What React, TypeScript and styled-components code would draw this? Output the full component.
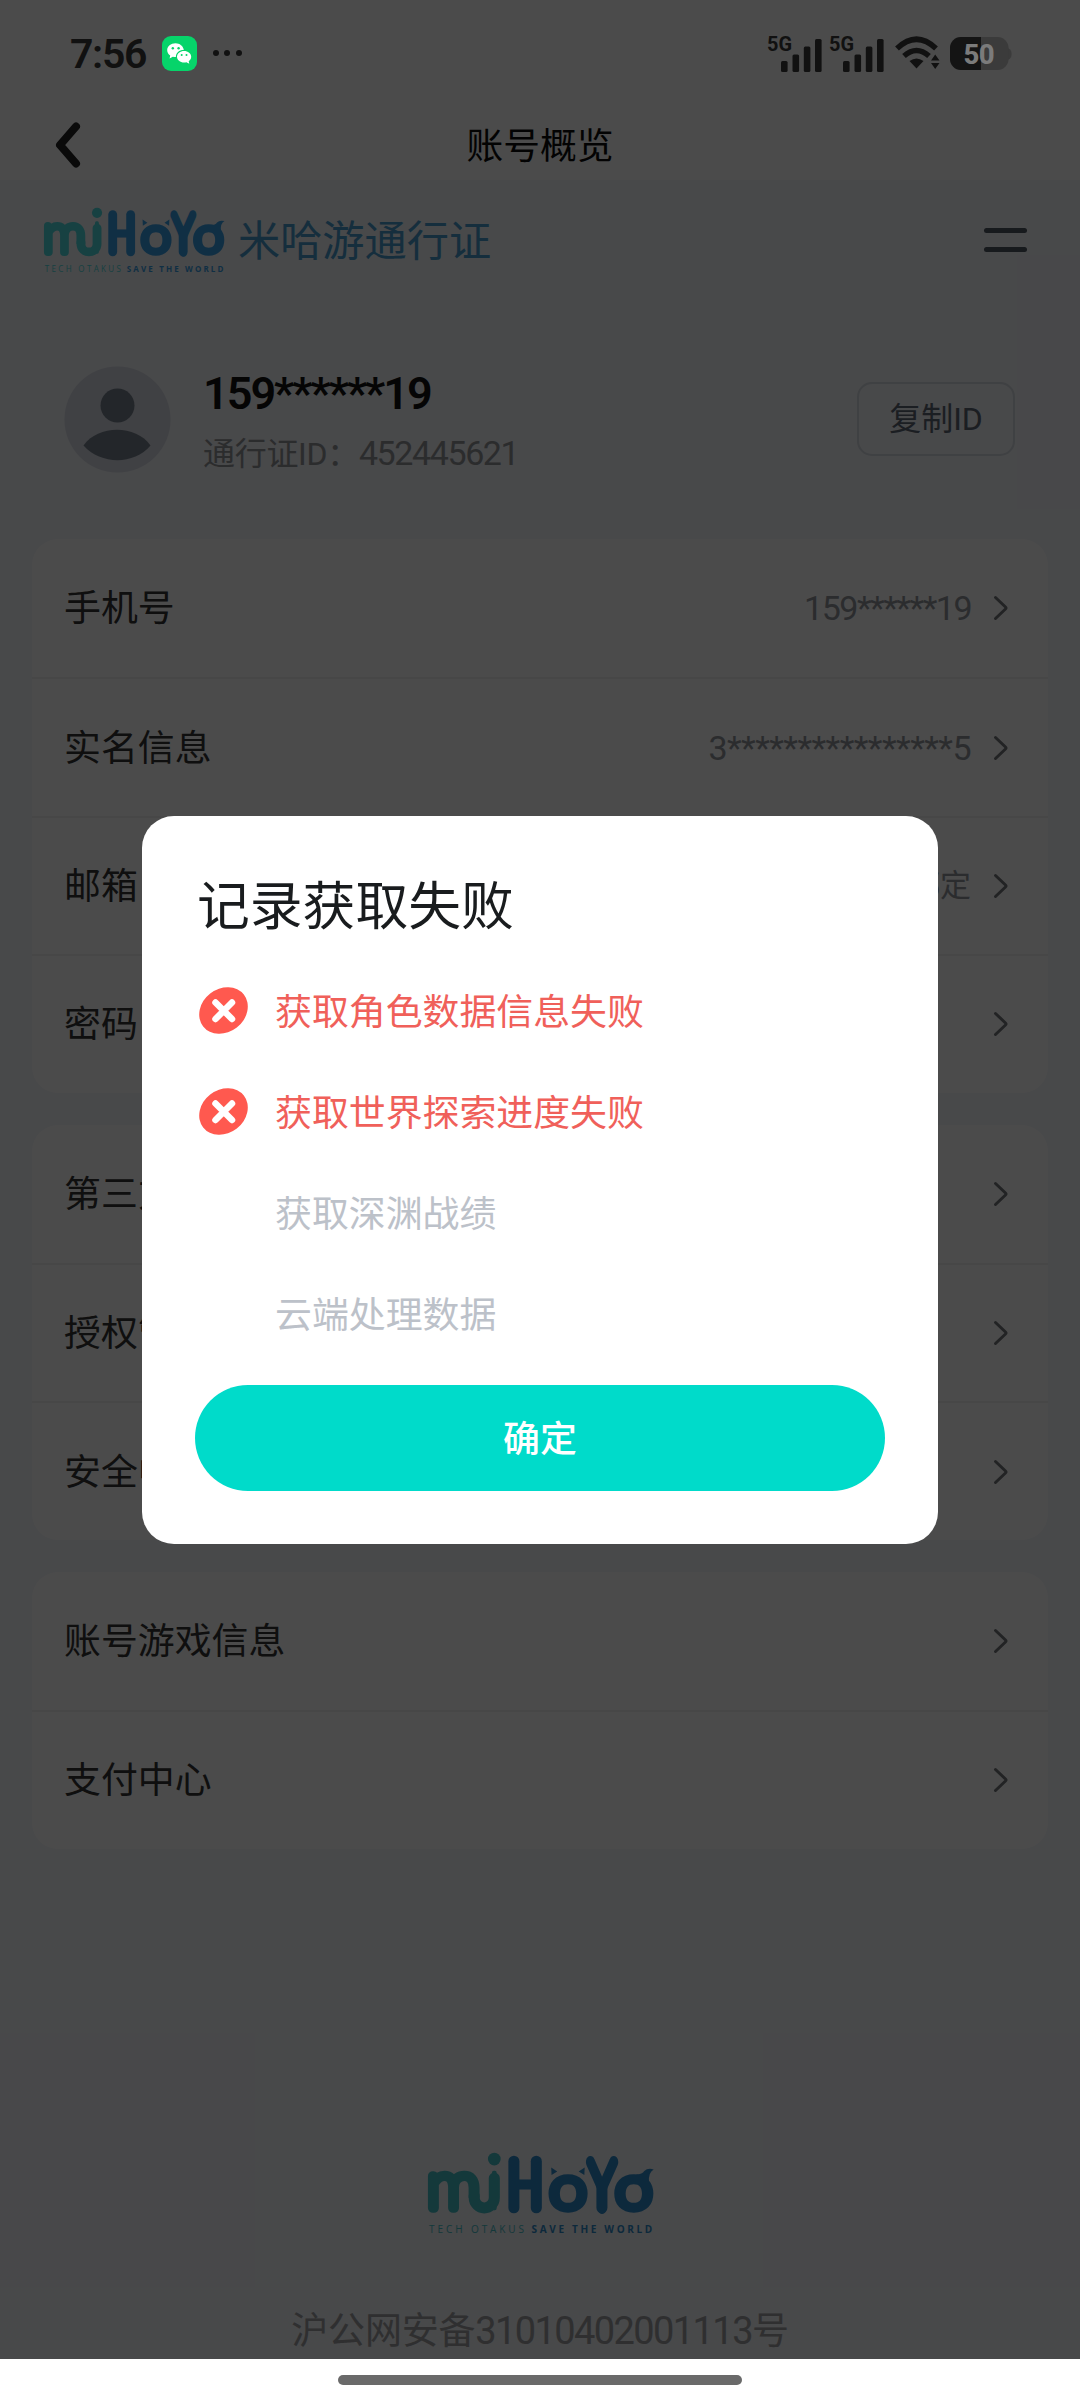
import React from "react";
import styled, { createGlobalStyle } from "styled-components";

const GlobalStyle = createGlobalStyle`
  *, *::before, *::after { box-sizing: border-box; }
  body {
    margin: 0;
    background: #fff;
    font-family: Roboto, "Noto Sans CJK SC", sans-serif;
    -webkit-font-smoothing: antialiased;
  }
  svg { display: block; overflow: visible; }
`;

const Phone = styled.div`
  width: 1080px;
  height: 2401px;
  display: flex;
  flex-direction: column;
  background: #fff;
  overflow: hidden;
`;

const Screen = styled.div`
  position: relative;
  height: 2359px;
  flex: none;
  display: flex;
  flex-direction: column;
  background: #f4f6fa;
`;

const TopArea = styled.div`
  height: 180px;
  flex: none;
  background: #fff;
`;

const StatusBar = styled.div`
  height: 106px;
  padding: 0 68px 0 70px;
  display: flex;
  align-items: center;
  justify-content: space-between;
`;

const StatusGroup = styled.div`
  display: flex;
  align-items: center;
`;

const Clock = styled.span`
  width: 92px;
  padding-top: 1px;
  font-size: 41px;
  line-height: 48px;
  font-weight: 600;
  letter-spacing: -1.3px;
  color: #3a3a3a;
`;

const AppBadge = styled.span`
  position: relative;
  z-index: 2;
  width: 35px;
  height: 35px;
  border-radius: 9px;
  background: #06d46a;
  overflow: hidden;
`;

const BatterySlot = styled.span`
  position: relative;
  z-index: 2;
  margin-left: 9px;
`;

const WifiSlot = styled.span`
  margin-left: 4px;
`;

const Dots = styled.span`
  display: flex;
  gap: 5.4px;
  margin-left: 16px;
  i {
    width: 6px;
    height: 6px;
    border-radius: 50%;
    background: #3a3a3a;
  }
`;

const NavBar = styled.div`
  height: 74px;
  display: grid;
  grid-template-columns: 200px 1fr 200px;
  align-items: center;
`;

const BackIcon = styled.svg`
  margin: 4px 0 0 51px;
`;

const NavTitle = styled.h1`
  margin: 8px 0 0;
  text-align: center;
  font-size: 36.8px;
  line-height: 50px;
  font-weight: 400;
  color: #0c0c0c;
`;

const BrandBar = styled.div`
  height: 126px;
  flex: none;
  padding: 0 53px 0 44px;
  display: flex;
  align-items: flex-start;
`;

const BrandLogo = styled.div`
  margin-top: 28px;
`;

const BrandTitle = styled.span`
  margin: 32px 0 0 14px;
  font-size: 42.2px;
  line-height: 60px;
  color: #4a9cd0;
`;

const MenuButton = styled.div`
  margin: 48px 0 0 auto;
  width: 43px;
  display: flex;
  flex-direction: column;
  gap: 14px;
  i {
    height: 5px;
    border-radius: 3px;
    background: #4f5864;
  }
`;

const Profile = styled.div`
  height: 233px;
  flex: none;
  padding: 60px 65px 0 64px;
  display: flex;
  align-items: flex-start;
`;

const ProfileText = styled.div`
  margin: 2px 0 0 32px;
  display: flex;
  flex-direction: column;
`;

const ProfileName = styled.strong`
  font-size: 45px;
  line-height: 52px;
  font-weight: 600;
  letter-spacing: -2px;
  color: #111;
`;

const ProfileId = styled.span`
  margin-top: 9px;
  font-size: 32px;
  line-height: 48px;
  color: #949599;
  letter-spacing: -0.3px;
`;

const IdDigits = styled.span`
  font-size: 34px;
  letter-spacing: -1.4px;
`;

const CopyButton = styled.button`
  margin: 16px 0 0 auto;
  width: 158px;
  height: 74px;
  padding: 0;
  border: 2px solid #d6dbe2;
  border-radius: 15px;
  background: transparent;
  font: 400 32px/1 Roboto, "Noto Sans CJK SC", sans-serif;
  color: #5d6675;
`;

const Cards = styled.div`
  padding: 0 32px;
  display: flex;
  flex-direction: column;
  gap: 32px;
`;

const Card = styled.div`
  border-radius: 26px;
  background: #fff;
  overflow: hidden;
`;

const Row = styled.div`
  height: 138.4px;
  padding: 0 39px 0 32px;
  display: flex;
  align-items: center;
  & + & { border-top: 2px solid #f2f2f2; }
`;

const RowLabel = styled.span`
  flex: 1;
  padding-top: 2px;
  font-size: 36.9px;
  line-height: 50px;
  color: #333;
`;

const RowValue = styled.span<{ $size: number; $spacing: number }>`
  margin-right: 22px;
  font-size: ${(p) => p.$size}px;
  line-height: 44px;
  letter-spacing: ${(p) => p.$spacing}px;
  color: #94969c;
`;

const Footer = styled.div`
  margin-top: auto;
  display: flex;
  flex-direction: column;
  align-items: center;
`;

const RecordNo = styled.span`
  margin-top: 71px;
  font-size: 37px;
  line-height: 54px;
  color: #a0a1a3;
  letter-spacing: -0.2px;
`;

const RecordDigits = styled.span`
  font-size: 38px;
  letter-spacing: -1.6px;
`;

const Overlay = styled.div`
  position: absolute;
  inset: 0;
  z-index: 1;
  display: flex;
  align-items: center;
  justify-content: center;
  background: rgba(0, 0, 0, 0.705);
`;

const Dialog = styled.div`
  width: 796px;
  height: 728px;
  padding: 53px 53px 53px;
  border-radius: 32px;
  background: #fff;
  display: flex;
  flex-direction: column;
`;

const DialogTitle = styled.h2`
  margin: 0 2px 15px;
  font-size: 52.8px;
  line-height: 76px;
  font-weight: 400;
  color: #191c1e;
`;

const Steps = styled.ul`
  margin: 0;
  padding: 0;
  list-style: none;
`;

const Step = styled.li<{ $failed?: boolean }>`
  height: 101px;
  display: grid;
  grid-template-columns: 49px 1fr;
  column-gap: 27px;
  align-items: center;
  padding-left: 4px;
  font-size: 36.9px;
  line-height: 50px;
  color: ${(p) => (p.$failed ? "#f0605a" : "#bcc1c9")};
`;

const StepText = styled.span`
  grid-column: 2;
  padding-top: 5px;
`;

const Confirm = styled.button`
  margin-top: auto;
  height: 106px;
  flex: none;
  padding: 5px 0 0;
  border: 0;
  border-radius: 53px;
  background: #00dbca;
  color: #fff;
  font: 500 36.9px/1 Roboto, "Noto Sans CJK SC", sans-serif;
`;

const GestureBar = styled.div`
  height: 42px;
  display: flex;
  justify-content: center;
  padding-top: 16px;
  i {
    width: 404px;
    height: 10px;
    border-radius: 5px;
    background: #6a6a6a;
  }
`;

type LetterProps = {
  ch: string;
  x: number;
  sx: number;
  sy?: number;
  color: string;
  weight: number;
};

function Letter({ ch, x, sx, sy = 1, color, weight }: LetterProps) {
  return (
    <text
      transform={`translate(${x} 164) scale(${sx} ${sy})`}
      fontSize="195"
      fontWeight="100"
      fontFamily="Lato, sans-serif"
      textAnchor="middle"
      fill={color}
      stroke={color}
      strokeWidth={weight}
      strokeLinejoin="round"
      strokeLinecap="round"
    >
      {ch}
    </text>
  );
}

function MihoyoLogo({ id, width, teal, blue }: { id: string; width: number; teal: string; blue: string }) {
  return (
    <svg width={width} height={(width * 240) / 672} viewBox="0 0 672 240">
      <clipPath id={id}>
        <path d="M-20 -20 H180 V134 H112 V200 H-20 Z" />
      </clipPath>
      <g clipPath={`url(#${id})`}>
        <Letter ch="m" x={76} sx={1.04} color={teal} weight={29} />
      </g>
      <Letter ch="i" x={198} sx={1} sy={1.1} color={teal} weight={12} />
      <circle cx="198" cy="18" r="19" fill={teal} />
      <path d="M138 128 V134 A30 30 0 0 0 198 134 V75" fill="none" stroke={teal} strokeWidth="33" strokeLinecap="round" />
      <rect x="240" y="8" width="33" height="172" rx="16.500" fill={blue} />
      <rect x="307" y="8" width="33" height="172" rx="16.500" fill={blue} />
      <Letter ch="H" x={290} sx={0.67} color={blue} weight={28} />
      <Letter ch="o" x={418} sx={1.02} sy={0.9} color={blue} weight={31} />
      <Letter ch="Y" x={520} sx={0.69} color={blue} weight={36} />
      <rect x="503" y="78" width="33" height="102" rx="16.500" fill={blue} />
      <Letter ch="o" x={615} sx={1.02} sy={0.9} color={blue} weight={31} />
      <path d="M368 43 L386 55 L369 66 Z M468 43 L450 55 L467 66 Z" fill={blue} />
      <path d="M622 64 Q640 64 646 54 Q656 44 674 49 Q658 58 660 86 L648 94 Z" fill={blue} />
      <g fontFamily='"Open Sans", sans-serif' fontSize="30">
        <text x="3" y="238" textLength="284" fill={teal} fontWeight="500">TECH OTAKUS</text>
        <text x="309" y="238" textLength="361" fill={blue} fontWeight="700">SAVE THE WORLD</text>
      </g>
    </svg>
  );
}

function WechatGlyph() {
  return (
    <svg width="35" height="35" viewBox="0 0 35 35">
      <path
        fill="#fff"
        d="M13.5 7.2c-4.700 0-8.300 3.100-8.300 7 0 2.200 1.200 4 3 5.300l-.6 2.900 3.200-1.700c1 .3 2 .4 3.100.4-.2-4.600 3.500-7.300 7.900-7.200-.6-3.900-4.100-6.700-8.300-6.700z"
      />
      <path
        fill="#fff"
        d="M22.100 14.900c-4 0-7.100 2.600-7.100 5.800s3.100 5.800 7.100 5.800c.8 0 1.600-.1 2.300-.3l2.900 1.500-.6-2.500c1.600-1.100 2.500-2.700 2.500-4.500 0-3.200-3.200-5.800-7.100-5.800z"
      />
      <g fill="#06d46a">
        <circle cx="10.800" cy="12.300" r="1.200" />
        <circle cx="16.600" cy="12.300" r="1.200" />
        <circle cx="19.700" cy="19" r="1" />
        <circle cx="24.500" cy="19" r="1" />
      </g>
    </svg>
  );
}

function Signal() {
  return (
    <svg width="62" height="40" viewBox="0 0 62 40" fill="#3c3c3c">
      <text x="0" y="17.500" fontFamily="Roboto, sans-serif" fontSize="20" fontWeight="700" textLength="25" lengthAdjust="spacingAndGlyphs">5G</text>
      <rect x="14" y="28" width="6.600" height="11" rx="1.500" />
      <rect x="25.500" y="21.500" width="6.600" height="17.500" rx="1.500" />
      <rect x="36.800" y="13.500" width="6.600" height="25.500" rx="1.500" />
      <rect x="48" y="6" width="6.600" height="33" rx="1.500" />
    </svg>
  );
}

function Wifi() {
  return (
    <svg width="46" height="34" viewBox="0 0 46 34">
      <g fill="none" stroke="#3c3c3c" strokeWidth="5.500">
        <path d="M2 12.500 Q21.500 -6 41 12.500" />
        <path d="M9 20 Q21.500 9 34 20" />
      </g>
      <path d="M14.500 25 Q21.500 20 28.500 25 L21.500 32.500 Z" fill="#3c3c3c" />
      <path d="M36 24.500 L40.200 18.500 L44.500 24.500 Z M36 27 L44.500 27 L40.200 33 Z" fill="#3c3c3c" />
    </svg>
  );
}

function Battery() {
  return (
    <svg width="62" height="33" viewBox="0 0 62 33">
      <rect x="50" y="11" width="11.500" height="12" rx="5" fill="#3b3b3b" />
      <rect x="0" y="0" width="58.500" height="33" rx="11" fill="#3b3b3b" />
      <path d="M11 0 H31 V33 H11 A11 11 0 0 1 0 22 V11 A11 11 0 0 1 11 0 Z" fill="#141414" />
      <text x="13.500" y="26.500" fontFamily="Roboto, sans-serif" fontSize="27.500" fontWeight="800" fill="#7b7b7b" textLength="31">50</text>
    </svg>
  );
}

function Avatar() {
  return (
    <svg width="107" height="107" viewBox="0 0 107 107">
      <circle cx="53.500" cy="53.500" r="53" fill="#d8dce6" />
      <circle cx="53.500" cy="39.500" r="17" fill="#78828f" />
      <path d="M19.500 79.500 C34 58.500 72 58.500 86.500 79.500 C70 99 37 99 19.500 79.500 Z" fill="#78828f" />
    </svg>
  );
}

function Chevron() {
  return (
    <svg width="16" height="26" viewBox="0 0 16 26" fill="none">
      <path d="M2.500 2.500 L12.500 12 Q13.600 13 12.500 14 L2.500 23.500" stroke="#75777c" strokeWidth="3" strokeLinecap="round" />
    </svg>
  );
}

function FailIcon() {
  return (
    <svg width="49" height="47" viewBox="0 0 49 47">
      <ellipse cx="24.500" cy="23.500" rx="25.800" ry="21.600" fill="#ff594f" transform="rotate(-38 24.500 23.500)" />
      <path d="M16.500 15.500 L33 32 M33 15.500 L16.500 32" stroke="#fff" strokeWidth="6.500" strokeLinecap="round" />
    </svg>
  );
}

type Item = { label: string; value?: string; size?: number; spacing?: number };

const groups: Item[][] = [
  [
    { label: "手机号", value: "159******19", size: 34, spacing: -1.5 },
    { label: "实名信息", value: "3****************5", size: 34, spacing: -0.55 },
    { label: "邮箱", value: "未绑定" },
    { label: "密码" },
  ],
  [{ label: "第三方账号" }, { label: "授权管理" }, { label: "安全中心" }],
  [{ label: "账号游戏信息" }, { label: "支付中心" }],
];

const steps = [
  { text: "获取角色数据信息失败", failed: true },
  { text: "获取世界探索进度失败", failed: true },
  { text: "获取深渊战绩", failed: false },
  { text: "云端处理数据", failed: false },
];

export default function App() {
  return (
    <Phone>
      <GlobalStyle />
      <Screen>
        <TopArea>
          <StatusBar>
            <StatusGroup>
              <Clock>7:56</Clock>
              <AppBadge>
                <WechatGlyph />
              </AppBadge>
              <Dots>
                <i />
                <i />
                <i />
              </Dots>
            </StatusGroup>
            <StatusGroup>
              <Signal />
              <Signal />
              <WifiSlot>
                <Wifi />
              </WifiSlot>
              <BatterySlot>
                <Battery />
              </BatterySlot>
            </StatusGroup>
          </StatusBar>
          <NavBar>
            <BackIcon width="32" height="50" viewBox="0 0 32 50" fill="none">
              <path d="M25 6.500 L9 25 L25 43.500" stroke="#222" strokeWidth="8" strokeLinecap="round" strokeLinejoin="round" />
            </BackIcon>
            <NavTitle>账号概览</NavTitle>
          </NavBar>
        </TopArea>

        <BrandBar>
          <BrandLogo>
            <MihoyoLogo id="logo-m-header" width={180} teal="#4fdbe0" blue="#38a0e6" />
          </BrandLogo>
          <BrandTitle>米哈游通行证</BrandTitle>
          <MenuButton>
            <i />
            <i />
          </MenuButton>
        </BrandBar>

        <Profile>
          <Avatar />
          <ProfileText>
            <ProfileName>159******19</ProfileName>
            <ProfileId>
              通行证ID：<IdDigits>452445621</IdDigits>
            </ProfileId>
          </ProfileText>
          <CopyButton>复制ID</CopyButton>
        </Profile>

        <Cards>
          {groups.map((items, g) => (
            <Card key={g}>
              {items.map((item) => (
                <Row key={item.label}>
                  <RowLabel>{item.label}</RowLabel>
                  {item.value && (
                    <RowValue $size={item.size ?? 31} $spacing={item.spacing ?? 0}>
                      {item.value}
                    </RowValue>
                  )}
                  <Chevron />
                </Row>
              ))}
            </Card>
          ))}
        </Cards>

        <Footer>
          <MihoyoLogo id="logo-m-footer" width={225} teal="#46c0c8" blue="#2f8ccc" />
          <RecordNo>
            沪公网安备<RecordDigits>31010402001113</RecordDigits>号
          </RecordNo>
        </Footer>

        <Overlay>
          <Dialog>
            <DialogTitle>记录获取失败</DialogTitle>
            <Steps>
              {steps.map((s) => (
                <Step key={s.text} $failed={s.failed}>
                  {s.failed && <FailIcon />}
                  <StepText>{s.text}</StepText>
                </Step>
              ))}
            </Steps>
            <Confirm>确定</Confirm>
          </Dialog>
        </Overlay>
      </Screen>
      <GestureBar>
        <i />
      </GestureBar>
    </Phone>
  );
}
